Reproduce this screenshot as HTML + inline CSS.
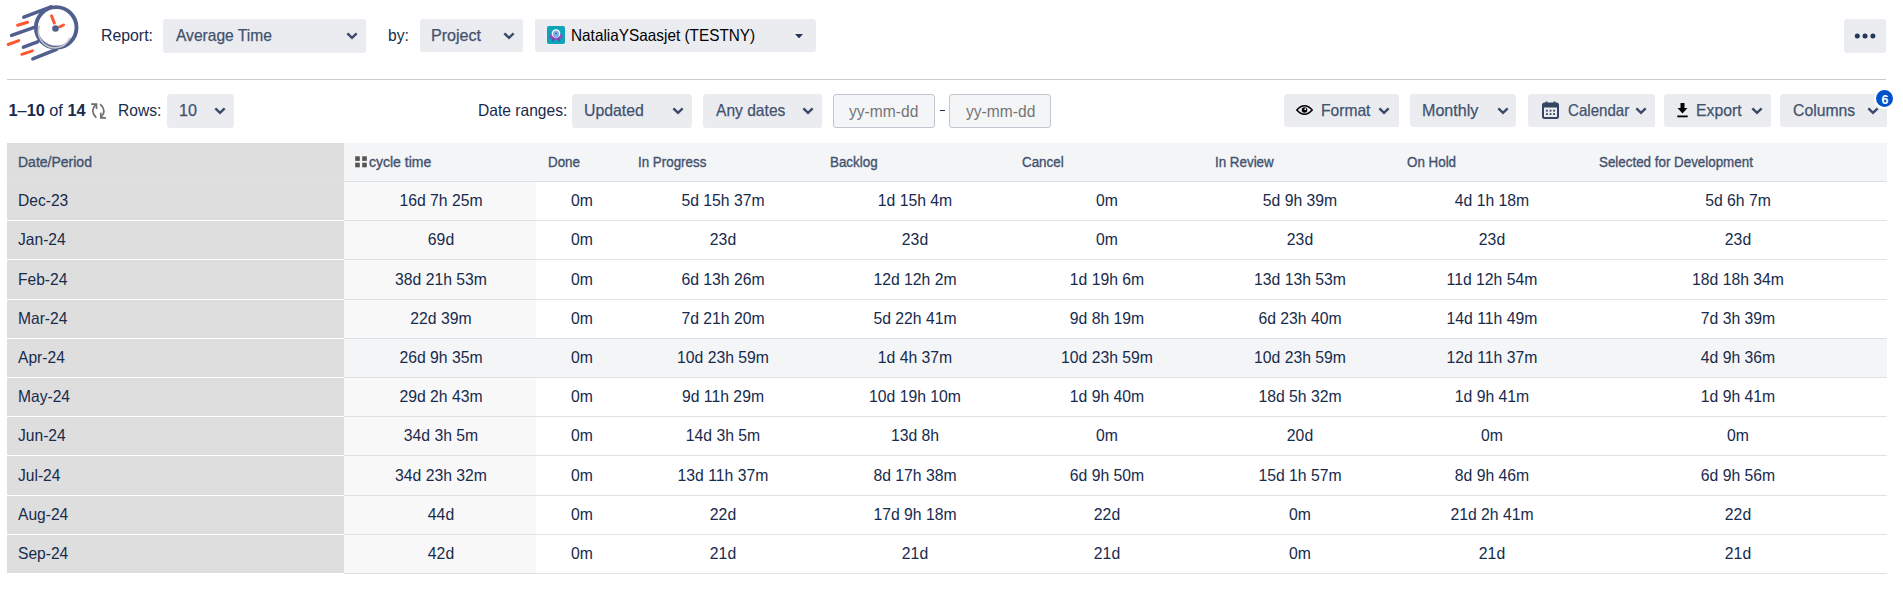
<!DOCTYPE html>
<html><head><meta charset="utf-8"><style>
html,body{margin:0;padding:0;background:#fff;width:1903px;height:595px;overflow:hidden;position:relative}
body{font-family:"Liberation Sans", sans-serif}
.t{position:absolute;white-space:nowrap;line-height:20px;font-family:"Liberation Sans", sans-serif}
.b{position:absolute}
</style></head><body>
<svg class="b" style="left:0;top:0" width="90" height="70" viewBox="0 0 90 70">
<g stroke="#505f8e" stroke-width="3.5" stroke-linecap="round" fill="none">
<path d="M23.8 17.2 L51 6.8"/>
<path d="M11.6 35.3 L34.2 27.4"/>
<path d="M23.4 47.2 L37.6 41.8"/>
<path d="M32.8 58.8 L56.5 49.4"/>
</g>
<circle cx="56.2" cy="27.4" r="20.3" fill="#fff" stroke="#505f8e" stroke-width="3.9"/>
<path d="M39.6 25.5 A16.2 16.2 0 0 0 70 37.5" fill="none" stroke="#c8c8c8" stroke-width="1.6"/>
<g stroke="#ff5630" stroke-width="3" stroke-linecap="round" fill="none">
<path d="M17.6 25.3 L27.6 22.3"/>
<path d="M8.2 44.5 L18.8 40.6"/>
<path d="M21.8 54.3 L32.4 50.8"/>
<path d="M51.5 15.8 L54.3 23"/>
<path d="M59.7 26.8 L63.5 25"/>
</g>
<circle cx="55.5" cy="28.5" r="3.3" fill="#505f8e"/>
</svg>
<div class="t" style="left:101.00px;top:25.18px;font-size:16.5px;color:#172b4d;font-weight:normal;transform:scaleX(0.96);transform-origin:0 0;">Report:</div>
<div class="b" style="left:163px;top:19px;width:203px;height:34px;background:#ebecf0;border-radius:3px;"></div>
<div class="t" style="left:176.00px;top:25.18px;font-size:16.5px;color:#42526e;font-weight:normal;transform:scaleX(0.945);transform-origin:0 0;-webkit-text-stroke:0.25px #42526e;">Average Time</div>
<svg class="b" style="left:345.7px;top:31.9px" width="12" height="8" viewBox="0 0 12 8"><path d="M2.2 2.2 L6 5.9 L9.8 2.2" fill="none" stroke="#3b4a69" stroke-width="2.4" stroke-linecap="square" stroke-linejoin="miter"/></svg>
<div class="t" style="left:388.00px;top:25.18px;font-size:16.5px;color:#172b4d;font-weight:normal;transform:scaleX(0.945);transform-origin:0 0;">by:</div>
<div class="b" style="left:420px;top:19px;width:103px;height:33px;background:#ebecf0;border-radius:3px;"></div>
<div class="t" style="left:431.00px;top:25.18px;font-size:16.5px;color:#42526e;font-weight:normal;transform:scaleX(0.975);transform-origin:0 0;-webkit-text-stroke:0.25px #42526e;">Project</div>
<svg class="b" style="left:503px;top:31.9px" width="12" height="8" viewBox="0 0 12 8"><path d="M2.2 2.2 L6 5.9 L9.8 2.2" fill="none" stroke="#3b4a69" stroke-width="2.4" stroke-linecap="square" stroke-linejoin="miter"/></svg>
<div class="b" style="left:535px;top:19px;width:281px;height:33px;background:#ebecf0;border-radius:3px;"></div>
<svg class="b" style="left:547px;top:26px" width="18" height="18" viewBox="0 0 18 18">
<rect x="0" y="0" width="18" height="18" rx="2" fill="#0fa3b9"/>
<ellipse cx="9" cy="10.5" rx="6.8" ry="3.6" fill="#8a4fc1"/>
<rect x="5.5" y="12.5" width="1.2" height="3" fill="#6a35a0"/>
<rect x="11.3" y="12.5" width="1.2" height="3" fill="#6a35a0"/>
<circle cx="9" cy="7.5" r="4.3" fill="#fff"/>
<ellipse cx="9" cy="8" rx="3.1" ry="3.6" fill="#7bb3e8"/>
<circle cx="9" cy="7.3" r="0.9" fill="#5a5a8a"/>
</svg>
<div class="t" style="left:571.20px;top:25.18px;font-size:16.5px;color:#000;font-weight:normal;transform:scaleX(0.93);transform-origin:0 0;">NataliaYSaasjet (TESTNY)</div>
<svg class="b" style="left:795px;top:33.8px" width="8" height="4.4" viewBox="0 0 8 4.4"><path d="M0 0 L8 0 L4 4.4 Z" fill="#253858"/></svg>
<div class="b" style="left:1844px;top:19px;width:42px;height:34px;background:#ebecf0;border-radius:3px;"></div>
<svg class="b" style="left:1854px;top:33.4px" width="22" height="6" viewBox="0 0 22 6"><circle cx="3.3" cy="3" r="2.5" fill="#253858"/><circle cx="11" cy="3" r="2.5" fill="#253858"/><circle cx="18.9" cy="3" r="2.5" fill="#253858"/></svg>
<div class="b" style="left:7px;top:79px;width:1879px;height:1px;background:#cccccc"></div>
<div class="t" style="left:8.50px;top:100.15px;font-size:16.3px;color:#172b4d;font-weight:normal;transform:scaleX(1);transform-origin:0 0;"><b>1</b>–<b>10</b> of <b>14</b></div>
<svg class="b" style="left:86px;top:98px" width="26" height="24" viewBox="0 0 26 24">
<g fill="none" stroke="#6e6e6e" stroke-width="1.7">
<path d="M10.3 19.6 Q3.4 13 9.9 6.4"/>
<path d="M5.2 6.1 L10.5 6.1 L10.5 11"/>
<path d="M14.2 6.2 Q21.3 13 14.8 19.3"/>
<path d="M14.8 14.8 L14.8 19.8 L20 19.8"/>
</g></svg>
<div class="t" style="left:118.20px;top:100.08px;font-size:16.5px;color:#172b4d;font-weight:normal;transform:scaleX(0.945);transform-origin:0 0;">Rows:</div>
<div class="b" style="left:167px;top:94px;width:67px;height:34px;background:#ebecf0;border-radius:3px;"></div>
<div class="t" style="left:178.50px;top:100.08px;font-size:16.5px;color:#42526e;font-weight:normal;transform:scaleX(0.98);transform-origin:0 0;-webkit-text-stroke:0.25px #42526e;">10</div>
<svg class="b" style="left:214px;top:106.9px" width="12" height="8" viewBox="0 0 12 8"><path d="M2.2 2.2 L6 5.9 L9.8 2.2" fill="none" stroke="#3b4a69" stroke-width="2.4" stroke-linecap="square" stroke-linejoin="miter"/></svg>
<div class="t" style="left:478.00px;top:100.08px;font-size:16.5px;color:#172b4d;font-weight:normal;transform:scaleX(0.945);transform-origin:0 0;">Date ranges:</div>
<div class="b" style="left:572px;top:94px;width:120px;height:34px;background:#ebecf0;border-radius:3px;"></div>
<div class="t" style="left:584.00px;top:100.08px;font-size:16.5px;color:#42526e;font-weight:normal;transform:scaleX(0.96);transform-origin:0 0;-webkit-text-stroke:0.25px #42526e;">Updated</div>
<svg class="b" style="left:671.6px;top:106.9px" width="12" height="8" viewBox="0 0 12 8"><path d="M2.2 2.2 L6 5.9 L9.8 2.2" fill="none" stroke="#3b4a69" stroke-width="2.4" stroke-linecap="square" stroke-linejoin="miter"/></svg>
<div class="b" style="left:703px;top:94px;width:119px;height:34px;background:#ebecf0;border-radius:3px;"></div>
<div class="t" style="left:715.50px;top:100.08px;font-size:16.5px;color:#42526e;font-weight:normal;transform:scaleX(0.945);transform-origin:0 0;-webkit-text-stroke:0.25px #42526e;">Any dates</div>
<svg class="b" style="left:802px;top:106.9px" width="12" height="8" viewBox="0 0 12 8"><path d="M2.2 2.2 L6 5.9 L9.8 2.2" fill="none" stroke="#3b4a69" stroke-width="2.4" stroke-linecap="square" stroke-linejoin="miter"/></svg>
<div class="b" style="left:833px;top:94px;width:100px;height:32px;background:#f4f5f7;border:1px solid #c1c7d0;border-radius:3px"></div>
<div class="t" style="left:849.00px;top:100.88px;font-size:16.5px;color:#757575;font-weight:normal;transform:scaleX(0.945);transform-origin:0 0;">yy-mm-dd</div>
<div class="b" style="left:940px;top:110px;width:5px;height:1.3px;background:#172b4d"></div>
<div class="b" style="left:949px;top:94px;width:100px;height:32px;background:#f4f5f7;border:1px solid #c1c7d0;border-radius:3px"></div>
<div class="t" style="left:965.50px;top:100.88px;font-size:16.5px;color:#757575;font-weight:normal;transform:scaleX(0.945);transform-origin:0 0;">yy-mm-dd</div>
<div class="b" style="left:1284px;top:94px;width:115px;height:33px;background:#ebecf0;border-radius:3px;"></div>
<svg class="b" style="left:1296px;top:104px" width="17" height="12" viewBox="0 0 17 12">
<path d="M0.8 6 Q8.5 -2.5 16.2 6 Q8.5 14.5 0.8 6 Z" fill="none" stroke="#000" stroke-width="1.5"/>
<circle cx="8.5" cy="6" r="2.8" fill="#000"/><circle cx="9.3" cy="5.2" r="0.9" fill="#fff"/></svg>
<div class="t" style="left:1321.20px;top:100.08px;font-size:16.5px;color:#42526e;font-weight:normal;transform:scaleX(0.945);transform-origin:0 0;-webkit-text-stroke:0.25px #42526e;">Format</div>
<svg class="b" style="left:1378.4px;top:106.8px" width="12" height="8" viewBox="0 0 12 8"><path d="M2.2 2.2 L6 5.9 L9.8 2.2" fill="none" stroke="#3b4a69" stroke-width="2.4" stroke-linecap="square" stroke-linejoin="miter"/></svg>
<div class="b" style="left:1410px;top:94px;width:106px;height:33px;background:#ebecf0;border-radius:3px;"></div>
<div class="t" style="left:1422.00px;top:100.08px;font-size:16.5px;color:#42526e;font-weight:normal;transform:scaleX(0.975);transform-origin:0 0;-webkit-text-stroke:0.25px #42526e;">Monthly</div>
<svg class="b" style="left:1497px;top:106.8px" width="12" height="8" viewBox="0 0 12 8"><path d="M2.2 2.2 L6 5.9 L9.8 2.2" fill="none" stroke="#3b4a69" stroke-width="2.4" stroke-linecap="square" stroke-linejoin="miter"/></svg>
<div class="b" style="left:1528px;top:94px;width:127px;height:33px;background:#ebecf0;border-radius:3px;"></div>
<svg class="b" style="left:1542px;top:101px" width="17" height="18" viewBox="0 0 17 18">
<rect x="1" y="2.5" width="15" height="14.5" rx="1.5" fill="none" stroke="#344563" stroke-width="2"/>
<rect x="1" y="2.5" width="15" height="4" fill="#344563"/>
<rect x="3.6" y="0.5" width="1.8" height="3" fill="#344563"/><rect x="11.6" y="0.5" width="1.8" height="3" fill="#344563"/>
<g fill="#344563"><rect x="4" y="8.8" width="1.8" height="1.8"/><rect x="7.6" y="8.8" width="1.8" height="1.8"/><rect x="11.2" y="8.8" width="1.8" height="1.8"/>
<rect x="4" y="12.2" width="1.8" height="1.8"/><rect x="7.6" y="12.2" width="1.8" height="1.8"/><rect x="11.2" y="12.2" width="1.8" height="1.8"/></g></svg>
<div class="t" style="left:1567.50px;top:100.08px;font-size:16.5px;color:#42526e;font-weight:normal;transform:scaleX(0.915);transform-origin:0 0;-webkit-text-stroke:0.25px #42526e;">Calendar</div>
<svg class="b" style="left:1635.3px;top:106.8px" width="12" height="8" viewBox="0 0 12 8"><path d="M2.2 2.2 L6 5.9 L9.8 2.2" fill="none" stroke="#3b4a69" stroke-width="2.4" stroke-linecap="square" stroke-linejoin="miter"/></svg>
<div class="b" style="left:1664px;top:94px;width:107px;height:33px;background:#ebecf0;border-radius:3px;"></div>
<svg class="b" style="left:1677px;top:103px" width="11" height="15" viewBox="0 0 11 15">
<path d="M3.5 0 L7.5 0 L7.5 5 L10.5 5 L5.5 10.5 L0.5 5 L3.5 5 Z" fill="#000"/>
<rect x="0.3" y="12.5" width="10.4" height="1.8" fill="#000"/></svg>
<div class="t" style="left:1696.00px;top:100.08px;font-size:16.5px;color:#42526e;font-weight:normal;transform:scaleX(0.955);transform-origin:0 0;-webkit-text-stroke:0.25px #42526e;">Export</div>
<svg class="b" style="left:1751px;top:106.8px" width="12" height="8" viewBox="0 0 12 8"><path d="M2.2 2.2 L6 5.9 L9.8 2.2" fill="none" stroke="#3b4a69" stroke-width="2.4" stroke-linecap="square" stroke-linejoin="miter"/></svg>
<div class="b" style="left:1780px;top:94px;width:107px;height:33px;background:#ebecf0;border-radius:3px;"></div>
<div class="t" style="left:1793.00px;top:100.08px;font-size:16.5px;color:#42526e;font-weight:normal;transform:scaleX(0.955);transform-origin:0 0;-webkit-text-stroke:0.25px #42526e;">Columns</div>
<svg class="b" style="left:1867px;top:106.8px" width="12" height="8" viewBox="0 0 12 8"><path d="M2.2 2.2 L6 5.9 L9.8 2.2" fill="none" stroke="#3b4a69" stroke-width="2.4" stroke-linecap="square" stroke-linejoin="miter"/></svg>
<div class="b" style="left:1874.3px;top:87.8px;width:21px;height:21px;border-radius:50%;background:#0052cc;border:2px solid #fff;box-sizing:border-box"></div>
<div class="t" style="left:1875px;top:89.6px;width:20px;text-align:center;font-size:12.5px;font-weight:bold;color:#fff;line-height:20px">6</div>
<div class="b" style="left:7px;top:143px;width:1880px;height:38px;background:#f4f5f7;border-radius:0px;"></div>
<div class="b" style="left:7px;top:143px;width:337px;height:38px;background:#dedede;border-radius:0px;"></div>
<div class="b" style="left:7px;top:181px;width:1880px;height:1px;background:#dfe1e6;border-radius:0px;"></div>
<div class="b" style="left:7px;top:182px;width:337px;height:38px;background:#dedede;border-radius:0px;"></div>
<div class="b" style="left:536px;top:182px;width:1351px;height:38px;background:#ffffff;border-radius:0px;"></div>
<div class="b" style="left:344px;top:182px;width:192px;height:38px;background:#f8f8f8;border-radius:0px;"></div>
<div class="b" style="left:7px;top:220px;width:337px;height:1px;background:#ffffff;border-radius:0px;"></div>
<div class="b" style="left:344px;top:220px;width:1543px;height:1px;background:#dfe1e6;border-radius:0px;"></div>
<div class="t" style="left:17.80px;top:190.18px;font-size:16.5px;color:#172b4d;font-weight:normal;transform:scaleX(0.945);transform-origin:0 0;">Dec-23</div>
<div class="t" style="left:290.80px;width:300px;text-align:center;top:190.18px;font-size:16.5px;color:#172b4d;transform:scaleX(0.955);transform-origin:50% 0;">16d 7h 25m</div>
<div class="t" style="left:431.80px;width:300px;text-align:center;top:190.18px;font-size:16.5px;color:#172b4d;transform:scaleX(0.955);transform-origin:50% 0;">0m</div>
<div class="t" style="left:572.80px;width:300px;text-align:center;top:190.18px;font-size:16.5px;color:#172b4d;transform:scaleX(0.955);transform-origin:50% 0;">5d 15h 37m</div>
<div class="t" style="left:764.80px;width:300px;text-align:center;top:190.18px;font-size:16.5px;color:#172b4d;transform:scaleX(0.955);transform-origin:50% 0;">1d 15h 4m</div>
<div class="t" style="left:957.30px;width:300px;text-align:center;top:190.18px;font-size:16.5px;color:#172b4d;transform:scaleX(0.955);transform-origin:50% 0;">0m</div>
<div class="t" style="left:1149.80px;width:300px;text-align:center;top:190.18px;font-size:16.5px;color:#172b4d;transform:scaleX(0.955);transform-origin:50% 0;">5d 9h 39m</div>
<div class="t" style="left:1341.80px;width:300px;text-align:center;top:190.18px;font-size:16.5px;color:#172b4d;transform:scaleX(0.955);transform-origin:50% 0;">4d 1h 18m</div>
<div class="t" style="left:1587.80px;width:300px;text-align:center;top:190.18px;font-size:16.5px;color:#172b4d;transform:scaleX(0.955);transform-origin:50% 0;">5d 6h 7m</div>
<div class="b" style="left:7px;top:221px;width:337px;height:38px;background:#dedede;border-radius:0px;"></div>
<div class="b" style="left:536px;top:221px;width:1351px;height:38px;background:#ffffff;border-radius:0px;"></div>
<div class="b" style="left:344px;top:221px;width:192px;height:38px;background:#f8f8f8;border-radius:0px;"></div>
<div class="b" style="left:7px;top:259px;width:337px;height:1px;background:#ffffff;border-radius:0px;"></div>
<div class="b" style="left:344px;top:259px;width:1543px;height:1px;background:#dfe1e6;border-radius:0px;"></div>
<div class="t" style="left:17.80px;top:229.38px;font-size:16.5px;color:#172b4d;font-weight:normal;transform:scaleX(0.945);transform-origin:0 0;">Jan-24</div>
<div class="t" style="left:290.80px;width:300px;text-align:center;top:229.38px;font-size:16.5px;color:#172b4d;transform:scaleX(0.955);transform-origin:50% 0;">69d</div>
<div class="t" style="left:431.80px;width:300px;text-align:center;top:229.38px;font-size:16.5px;color:#172b4d;transform:scaleX(0.955);transform-origin:50% 0;">0m</div>
<div class="t" style="left:572.80px;width:300px;text-align:center;top:229.38px;font-size:16.5px;color:#172b4d;transform:scaleX(0.955);transform-origin:50% 0;">23d</div>
<div class="t" style="left:764.80px;width:300px;text-align:center;top:229.38px;font-size:16.5px;color:#172b4d;transform:scaleX(0.955);transform-origin:50% 0;">23d</div>
<div class="t" style="left:957.30px;width:300px;text-align:center;top:229.38px;font-size:16.5px;color:#172b4d;transform:scaleX(0.955);transform-origin:50% 0;">0m</div>
<div class="t" style="left:1149.80px;width:300px;text-align:center;top:229.38px;font-size:16.5px;color:#172b4d;transform:scaleX(0.955);transform-origin:50% 0;">23d</div>
<div class="t" style="left:1341.80px;width:300px;text-align:center;top:229.38px;font-size:16.5px;color:#172b4d;transform:scaleX(0.955);transform-origin:50% 0;">23d</div>
<div class="t" style="left:1587.80px;width:300px;text-align:center;top:229.38px;font-size:16.5px;color:#172b4d;transform:scaleX(0.955);transform-origin:50% 0;">23d</div>
<div class="b" style="left:7px;top:260px;width:337px;height:39px;background:#dedede;border-radius:0px;"></div>
<div class="b" style="left:536px;top:260px;width:1351px;height:39px;background:#ffffff;border-radius:0px;"></div>
<div class="b" style="left:344px;top:260px;width:192px;height:39px;background:#f8f8f8;border-radius:0px;"></div>
<div class="b" style="left:7px;top:299px;width:337px;height:1px;background:#ffffff;border-radius:0px;"></div>
<div class="b" style="left:344px;top:299px;width:1543px;height:1px;background:#dfe1e6;border-radius:0px;"></div>
<div class="t" style="left:17.80px;top:268.58px;font-size:16.5px;color:#172b4d;font-weight:normal;transform:scaleX(0.945);transform-origin:0 0;">Feb-24</div>
<div class="t" style="left:290.80px;width:300px;text-align:center;top:268.58px;font-size:16.5px;color:#172b4d;transform:scaleX(0.955);transform-origin:50% 0;">38d 21h 53m</div>
<div class="t" style="left:431.80px;width:300px;text-align:center;top:268.58px;font-size:16.5px;color:#172b4d;transform:scaleX(0.955);transform-origin:50% 0;">0m</div>
<div class="t" style="left:572.80px;width:300px;text-align:center;top:268.58px;font-size:16.5px;color:#172b4d;transform:scaleX(0.955);transform-origin:50% 0;">6d 13h 26m</div>
<div class="t" style="left:764.80px;width:300px;text-align:center;top:268.58px;font-size:16.5px;color:#172b4d;transform:scaleX(0.955);transform-origin:50% 0;">12d 12h 2m</div>
<div class="t" style="left:957.30px;width:300px;text-align:center;top:268.58px;font-size:16.5px;color:#172b4d;transform:scaleX(0.955);transform-origin:50% 0;">1d 19h 6m</div>
<div class="t" style="left:1149.80px;width:300px;text-align:center;top:268.58px;font-size:16.5px;color:#172b4d;transform:scaleX(0.955);transform-origin:50% 0;">13d 13h 53m</div>
<div class="t" style="left:1341.80px;width:300px;text-align:center;top:268.58px;font-size:16.5px;color:#172b4d;transform:scaleX(0.955);transform-origin:50% 0;">11d 12h 54m</div>
<div class="t" style="left:1587.80px;width:300px;text-align:center;top:268.58px;font-size:16.5px;color:#172b4d;transform:scaleX(0.955);transform-origin:50% 0;">18d 18h 34m</div>
<div class="b" style="left:7px;top:300px;width:337px;height:38px;background:#dedede;border-radius:0px;"></div>
<div class="b" style="left:536px;top:300px;width:1351px;height:38px;background:#ffffff;border-radius:0px;"></div>
<div class="b" style="left:344px;top:300px;width:192px;height:38px;background:#f8f8f8;border-radius:0px;"></div>
<div class="b" style="left:7px;top:338px;width:337px;height:1px;background:#ffffff;border-radius:0px;"></div>
<div class="b" style="left:344px;top:338px;width:1543px;height:1px;background:#dfe1e6;border-radius:0px;"></div>
<div class="t" style="left:17.80px;top:307.78px;font-size:16.5px;color:#172b4d;font-weight:normal;transform:scaleX(0.945);transform-origin:0 0;">Mar-24</div>
<div class="t" style="left:290.80px;width:300px;text-align:center;top:307.78px;font-size:16.5px;color:#172b4d;transform:scaleX(0.955);transform-origin:50% 0;">22d 39m</div>
<div class="t" style="left:431.80px;width:300px;text-align:center;top:307.78px;font-size:16.5px;color:#172b4d;transform:scaleX(0.955);transform-origin:50% 0;">0m</div>
<div class="t" style="left:572.80px;width:300px;text-align:center;top:307.78px;font-size:16.5px;color:#172b4d;transform:scaleX(0.955);transform-origin:50% 0;">7d 21h 20m</div>
<div class="t" style="left:764.80px;width:300px;text-align:center;top:307.78px;font-size:16.5px;color:#172b4d;transform:scaleX(0.955);transform-origin:50% 0;">5d 22h 41m</div>
<div class="t" style="left:957.30px;width:300px;text-align:center;top:307.78px;font-size:16.5px;color:#172b4d;transform:scaleX(0.955);transform-origin:50% 0;">9d 8h 19m</div>
<div class="t" style="left:1149.80px;width:300px;text-align:center;top:307.78px;font-size:16.5px;color:#172b4d;transform:scaleX(0.955);transform-origin:50% 0;">6d 23h 40m</div>
<div class="t" style="left:1341.80px;width:300px;text-align:center;top:307.78px;font-size:16.5px;color:#172b4d;transform:scaleX(0.955);transform-origin:50% 0;">14d 11h 49m</div>
<div class="t" style="left:1587.80px;width:300px;text-align:center;top:307.78px;font-size:16.5px;color:#172b4d;transform:scaleX(0.955);transform-origin:50% 0;">7d 3h 39m</div>
<div class="b" style="left:7px;top:339px;width:337px;height:38px;background:#dedede;border-radius:0px;"></div>
<div class="b" style="left:536px;top:339px;width:1351px;height:38px;background:#f4f5f7;border-radius:0px;"></div>
<div class="b" style="left:344px;top:339px;width:192px;height:38px;background:#f4f5f7;border-radius:0px;"></div>
<div class="b" style="left:7px;top:377px;width:337px;height:1px;background:#ffffff;border-radius:0px;"></div>
<div class="b" style="left:344px;top:377px;width:1543px;height:1px;background:#dfe1e6;border-radius:0px;"></div>
<div class="t" style="left:17.80px;top:346.98px;font-size:16.5px;color:#172b4d;font-weight:normal;transform:scaleX(0.945);transform-origin:0 0;">Apr-24</div>
<div class="t" style="left:290.80px;width:300px;text-align:center;top:346.98px;font-size:16.5px;color:#172b4d;transform:scaleX(0.955);transform-origin:50% 0;">26d 9h 35m</div>
<div class="t" style="left:431.80px;width:300px;text-align:center;top:346.98px;font-size:16.5px;color:#172b4d;transform:scaleX(0.955);transform-origin:50% 0;">0m</div>
<div class="t" style="left:572.80px;width:300px;text-align:center;top:346.98px;font-size:16.5px;color:#172b4d;transform:scaleX(0.955);transform-origin:50% 0;">10d 23h 59m</div>
<div class="t" style="left:764.80px;width:300px;text-align:center;top:346.98px;font-size:16.5px;color:#172b4d;transform:scaleX(0.955);transform-origin:50% 0;">1d 4h 37m</div>
<div class="t" style="left:957.30px;width:300px;text-align:center;top:346.98px;font-size:16.5px;color:#172b4d;transform:scaleX(0.955);transform-origin:50% 0;">10d 23h 59m</div>
<div class="t" style="left:1149.80px;width:300px;text-align:center;top:346.98px;font-size:16.5px;color:#172b4d;transform:scaleX(0.955);transform-origin:50% 0;">10d 23h 59m</div>
<div class="t" style="left:1341.80px;width:300px;text-align:center;top:346.98px;font-size:16.5px;color:#172b4d;transform:scaleX(0.955);transform-origin:50% 0;">12d 11h 37m</div>
<div class="t" style="left:1587.80px;width:300px;text-align:center;top:346.98px;font-size:16.5px;color:#172b4d;transform:scaleX(0.955);transform-origin:50% 0;">4d 9h 36m</div>
<div class="b" style="left:7px;top:378px;width:337px;height:38px;background:#dedede;border-radius:0px;"></div>
<div class="b" style="left:536px;top:378px;width:1351px;height:38px;background:#ffffff;border-radius:0px;"></div>
<div class="b" style="left:344px;top:378px;width:192px;height:38px;background:#f8f8f8;border-radius:0px;"></div>
<div class="b" style="left:7px;top:416px;width:337px;height:1px;background:#ffffff;border-radius:0px;"></div>
<div class="b" style="left:344px;top:416px;width:1543px;height:1px;background:#dfe1e6;border-radius:0px;"></div>
<div class="t" style="left:17.80px;top:386.18px;font-size:16.5px;color:#172b4d;font-weight:normal;transform:scaleX(0.945);transform-origin:0 0;">May-24</div>
<div class="t" style="left:290.80px;width:300px;text-align:center;top:386.18px;font-size:16.5px;color:#172b4d;transform:scaleX(0.955);transform-origin:50% 0;">29d 2h 43m</div>
<div class="t" style="left:431.80px;width:300px;text-align:center;top:386.18px;font-size:16.5px;color:#172b4d;transform:scaleX(0.955);transform-origin:50% 0;">0m</div>
<div class="t" style="left:572.80px;width:300px;text-align:center;top:386.18px;font-size:16.5px;color:#172b4d;transform:scaleX(0.955);transform-origin:50% 0;">9d 11h 29m</div>
<div class="t" style="left:764.80px;width:300px;text-align:center;top:386.18px;font-size:16.5px;color:#172b4d;transform:scaleX(0.955);transform-origin:50% 0;">10d 19h 10m</div>
<div class="t" style="left:957.30px;width:300px;text-align:center;top:386.18px;font-size:16.5px;color:#172b4d;transform:scaleX(0.955);transform-origin:50% 0;">1d 9h 40m</div>
<div class="t" style="left:1149.80px;width:300px;text-align:center;top:386.18px;font-size:16.5px;color:#172b4d;transform:scaleX(0.955);transform-origin:50% 0;">18d 5h 32m</div>
<div class="t" style="left:1341.80px;width:300px;text-align:center;top:386.18px;font-size:16.5px;color:#172b4d;transform:scaleX(0.955);transform-origin:50% 0;">1d 9h 41m</div>
<div class="t" style="left:1587.80px;width:300px;text-align:center;top:386.18px;font-size:16.5px;color:#172b4d;transform:scaleX(0.955);transform-origin:50% 0;">1d 9h 41m</div>
<div class="b" style="left:7px;top:417px;width:337px;height:38px;background:#dedede;border-radius:0px;"></div>
<div class="b" style="left:536px;top:417px;width:1351px;height:38px;background:#ffffff;border-radius:0px;"></div>
<div class="b" style="left:344px;top:417px;width:192px;height:38px;background:#f8f8f8;border-radius:0px;"></div>
<div class="b" style="left:7px;top:455px;width:337px;height:1px;background:#ffffff;border-radius:0px;"></div>
<div class="b" style="left:344px;top:455px;width:1543px;height:1px;background:#dfe1e6;border-radius:0px;"></div>
<div class="t" style="left:17.80px;top:425.38px;font-size:16.5px;color:#172b4d;font-weight:normal;transform:scaleX(0.945);transform-origin:0 0;">Jun-24</div>
<div class="t" style="left:290.80px;width:300px;text-align:center;top:425.38px;font-size:16.5px;color:#172b4d;transform:scaleX(0.955);transform-origin:50% 0;">34d 3h 5m</div>
<div class="t" style="left:431.80px;width:300px;text-align:center;top:425.38px;font-size:16.5px;color:#172b4d;transform:scaleX(0.955);transform-origin:50% 0;">0m</div>
<div class="t" style="left:572.80px;width:300px;text-align:center;top:425.38px;font-size:16.5px;color:#172b4d;transform:scaleX(0.955);transform-origin:50% 0;">14d 3h 5m</div>
<div class="t" style="left:764.80px;width:300px;text-align:center;top:425.38px;font-size:16.5px;color:#172b4d;transform:scaleX(0.955);transform-origin:50% 0;">13d 8h</div>
<div class="t" style="left:957.30px;width:300px;text-align:center;top:425.38px;font-size:16.5px;color:#172b4d;transform:scaleX(0.955);transform-origin:50% 0;">0m</div>
<div class="t" style="left:1149.80px;width:300px;text-align:center;top:425.38px;font-size:16.5px;color:#172b4d;transform:scaleX(0.955);transform-origin:50% 0;">20d</div>
<div class="t" style="left:1341.80px;width:300px;text-align:center;top:425.38px;font-size:16.5px;color:#172b4d;transform:scaleX(0.955);transform-origin:50% 0;">0m</div>
<div class="t" style="left:1587.80px;width:300px;text-align:center;top:425.38px;font-size:16.5px;color:#172b4d;transform:scaleX(0.955);transform-origin:50% 0;">0m</div>
<div class="b" style="left:7px;top:456px;width:337px;height:39px;background:#dedede;border-radius:0px;"></div>
<div class="b" style="left:536px;top:456px;width:1351px;height:39px;background:#ffffff;border-radius:0px;"></div>
<div class="b" style="left:344px;top:456px;width:192px;height:39px;background:#f8f8f8;border-radius:0px;"></div>
<div class="b" style="left:7px;top:495px;width:337px;height:1px;background:#ffffff;border-radius:0px;"></div>
<div class="b" style="left:344px;top:495px;width:1543px;height:1px;background:#dfe1e6;border-radius:0px;"></div>
<div class="t" style="left:17.80px;top:464.58px;font-size:16.5px;color:#172b4d;font-weight:normal;transform:scaleX(0.945);transform-origin:0 0;">Jul-24</div>
<div class="t" style="left:290.80px;width:300px;text-align:center;top:464.58px;font-size:16.5px;color:#172b4d;transform:scaleX(0.955);transform-origin:50% 0;">34d 23h 32m</div>
<div class="t" style="left:431.80px;width:300px;text-align:center;top:464.58px;font-size:16.5px;color:#172b4d;transform:scaleX(0.955);transform-origin:50% 0;">0m</div>
<div class="t" style="left:572.80px;width:300px;text-align:center;top:464.58px;font-size:16.5px;color:#172b4d;transform:scaleX(0.955);transform-origin:50% 0;">13d 11h 37m</div>
<div class="t" style="left:764.80px;width:300px;text-align:center;top:464.58px;font-size:16.5px;color:#172b4d;transform:scaleX(0.955);transform-origin:50% 0;">8d 17h 38m</div>
<div class="t" style="left:957.30px;width:300px;text-align:center;top:464.58px;font-size:16.5px;color:#172b4d;transform:scaleX(0.955);transform-origin:50% 0;">6d 9h 50m</div>
<div class="t" style="left:1149.80px;width:300px;text-align:center;top:464.58px;font-size:16.5px;color:#172b4d;transform:scaleX(0.955);transform-origin:50% 0;">15d 1h 57m</div>
<div class="t" style="left:1341.80px;width:300px;text-align:center;top:464.58px;font-size:16.5px;color:#172b4d;transform:scaleX(0.955);transform-origin:50% 0;">8d 9h 46m</div>
<div class="t" style="left:1587.80px;width:300px;text-align:center;top:464.58px;font-size:16.5px;color:#172b4d;transform:scaleX(0.955);transform-origin:50% 0;">6d 9h 56m</div>
<div class="b" style="left:7px;top:496px;width:337px;height:38px;background:#dedede;border-radius:0px;"></div>
<div class="b" style="left:536px;top:496px;width:1351px;height:38px;background:#ffffff;border-radius:0px;"></div>
<div class="b" style="left:344px;top:496px;width:192px;height:38px;background:#f8f8f8;border-radius:0px;"></div>
<div class="b" style="left:7px;top:534px;width:337px;height:1px;background:#ffffff;border-radius:0px;"></div>
<div class="b" style="left:344px;top:534px;width:1543px;height:1px;background:#dfe1e6;border-radius:0px;"></div>
<div class="t" style="left:17.80px;top:503.78px;font-size:16.5px;color:#172b4d;font-weight:normal;transform:scaleX(0.945);transform-origin:0 0;">Aug-24</div>
<div class="t" style="left:290.80px;width:300px;text-align:center;top:503.78px;font-size:16.5px;color:#172b4d;transform:scaleX(0.955);transform-origin:50% 0;">44d</div>
<div class="t" style="left:431.80px;width:300px;text-align:center;top:503.78px;font-size:16.5px;color:#172b4d;transform:scaleX(0.955);transform-origin:50% 0;">0m</div>
<div class="t" style="left:572.80px;width:300px;text-align:center;top:503.78px;font-size:16.5px;color:#172b4d;transform:scaleX(0.955);transform-origin:50% 0;">22d</div>
<div class="t" style="left:764.80px;width:300px;text-align:center;top:503.78px;font-size:16.5px;color:#172b4d;transform:scaleX(0.955);transform-origin:50% 0;">17d 9h 18m</div>
<div class="t" style="left:957.30px;width:300px;text-align:center;top:503.78px;font-size:16.5px;color:#172b4d;transform:scaleX(0.955);transform-origin:50% 0;">22d</div>
<div class="t" style="left:1149.80px;width:300px;text-align:center;top:503.78px;font-size:16.5px;color:#172b4d;transform:scaleX(0.955);transform-origin:50% 0;">0m</div>
<div class="t" style="left:1341.80px;width:300px;text-align:center;top:503.78px;font-size:16.5px;color:#172b4d;transform:scaleX(0.955);transform-origin:50% 0;">21d 2h 41m</div>
<div class="t" style="left:1587.80px;width:300px;text-align:center;top:503.78px;font-size:16.5px;color:#172b4d;transform:scaleX(0.955);transform-origin:50% 0;">22d</div>
<div class="b" style="left:7px;top:535px;width:337px;height:38px;background:#dedede;border-radius:0px;"></div>
<div class="b" style="left:536px;top:535px;width:1351px;height:38px;background:#ffffff;border-radius:0px;"></div>
<div class="b" style="left:344px;top:535px;width:192px;height:38px;background:#f8f8f8;border-radius:0px;"></div>
<div class="b" style="left:344px;top:573px;width:1543px;height:1px;background:#dfe1e6;border-radius:0px;"></div>
<div class="t" style="left:17.80px;top:542.98px;font-size:16.5px;color:#172b4d;font-weight:normal;transform:scaleX(0.945);transform-origin:0 0;">Sep-24</div>
<div class="t" style="left:290.80px;width:300px;text-align:center;top:542.98px;font-size:16.5px;color:#172b4d;transform:scaleX(0.955);transform-origin:50% 0;">42d</div>
<div class="t" style="left:431.80px;width:300px;text-align:center;top:542.98px;font-size:16.5px;color:#172b4d;transform:scaleX(0.955);transform-origin:50% 0;">0m</div>
<div class="t" style="left:572.80px;width:300px;text-align:center;top:542.98px;font-size:16.5px;color:#172b4d;transform:scaleX(0.955);transform-origin:50% 0;">21d</div>
<div class="t" style="left:764.80px;width:300px;text-align:center;top:542.98px;font-size:16.5px;color:#172b4d;transform:scaleX(0.955);transform-origin:50% 0;">21d</div>
<div class="t" style="left:957.30px;width:300px;text-align:center;top:542.98px;font-size:16.5px;color:#172b4d;transform:scaleX(0.955);transform-origin:50% 0;">21d</div>
<div class="t" style="left:1149.80px;width:300px;text-align:center;top:542.98px;font-size:16.5px;color:#172b4d;transform:scaleX(0.955);transform-origin:50% 0;">0m</div>
<div class="t" style="left:1341.80px;width:300px;text-align:center;top:542.98px;font-size:16.5px;color:#172b4d;transform:scaleX(0.955);transform-origin:50% 0;">21d</div>
<div class="t" style="left:1587.80px;width:300px;text-align:center;top:542.98px;font-size:16.5px;color:#172b4d;transform:scaleX(0.955);transform-origin:50% 0;">21d</div>
<div class="t" style="left:18.00px;top:152.45px;font-size:14px;color:#42526e;font-weight:normal;transform:scaleX(1.0);transform-origin:0 0;-webkit-text-stroke:0.35px #42526e;">Date/Period</div>
<svg class="b" style="left:355px;top:155.5px" width="12" height="12" viewBox="0 0 12 12"><g fill="#555"><rect x="0.2" y="0.3" width="4.6" height="4.6"/><rect x="7.2" y="0.3" width="4.6" height="4.6"/><rect x="0.2" y="6.7" width="4.6" height="4.6"/><rect x="7.2" y="6.7" width="4.6" height="4.6"/></g></svg>
<div class="t" style="left:369.00px;top:152.45px;font-size:14px;color:#42526e;font-weight:normal;transform:scaleX(1.0);transform-origin:0 0;-webkit-text-stroke:0.35px #42526e;">cycle time</div>
<div class="t" style="left:548.00px;top:152.45px;font-size:14px;color:#42526e;font-weight:normal;transform:scaleX(0.955);transform-origin:0 0;-webkit-text-stroke:0.35px #42526e;">Done</div>
<div class="t" style="left:638.00px;top:152.45px;font-size:14px;color:#42526e;font-weight:normal;transform:scaleX(0.955);transform-origin:0 0;-webkit-text-stroke:0.35px #42526e;">In Progress</div>
<div class="t" style="left:830.00px;top:152.45px;font-size:14px;color:#42526e;font-weight:normal;transform:scaleX(0.955);transform-origin:0 0;-webkit-text-stroke:0.35px #42526e;">Backlog</div>
<div class="t" style="left:1022.00px;top:152.45px;font-size:14px;color:#42526e;font-weight:normal;transform:scaleX(0.955);transform-origin:0 0;-webkit-text-stroke:0.35px #42526e;">Cancel</div>
<div class="t" style="left:1215.00px;top:152.45px;font-size:14px;color:#42526e;font-weight:normal;transform:scaleX(0.955);transform-origin:0 0;-webkit-text-stroke:0.35px #42526e;">In Review</div>
<div class="t" style="left:1407.00px;top:152.45px;font-size:14px;color:#42526e;font-weight:normal;transform:scaleX(0.955);transform-origin:0 0;-webkit-text-stroke:0.35px #42526e;">On Hold</div>
<div class="t" style="left:1599.00px;top:152.45px;font-size:14px;color:#42526e;font-weight:normal;transform:scaleX(0.955);transform-origin:0 0;-webkit-text-stroke:0.35px #42526e;">Selected for Development</div>
</body></html>
